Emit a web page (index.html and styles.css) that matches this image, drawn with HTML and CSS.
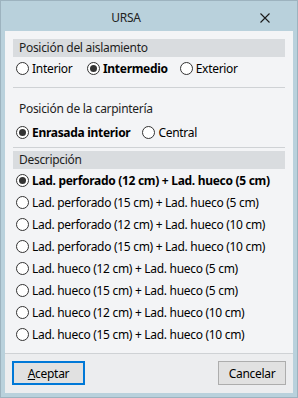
FILE: index.html
```html
<!DOCTYPE html>
<html lang="es">
<head>
  <meta charset="UTF-8">
  <meta name="viewport" content="width=device-width, initial-scale=1.0">
  <title>URSA</title>
  <link rel="stylesheet" href="styles.css">
</head>
<body>
  <div class="window">
    <div class="titlebar">
      <div class="title">URSA</div>
      <div class="close-button">
        <svg width="10" height="10" viewBox="0 0 10 10">
          <path d="M0.5 0.5 L9.5 9.5 M9.5 0.5 L0.5 9.5" stroke="#1a1a1a" stroke-width="1.1" fill="none"/>
        </svg>
      </div>
    </div>

    <div class="client">
      <div class="content">
        <div class="group">
          <div class="group-title shaded">Posición del aislamiento</div>
          <div class="option-row">
            <label class="radio wide"><span class="circle"></span>Interior</label>
            <label class="radio checked"><span class="circle"></span>Intermedio</label>
            <label class="radio"><span class="circle"></span>Exterior</label>
          </div>
        </div>

        <div class="separator"></div>

        <div class="group group-plain">
          <div class="group-title">Posición de la carpintería</div>
          <div class="option-row">
            <label class="radio checked"><span class="circle"></span>Enrasada interior</label>
            <label class="radio"><span class="circle"></span>Central</label>
          </div>
        </div>

        <div class="separator separator-tight"></div>

        <div class="group">
          <div class="group-title shaded">Descripción</div>
          <div class="option-list">
            <label class="radio checked"><span class="circle"></span>Lad. perforado (12 cm) + Lad. hueco (5 cm)</label>
            <label class="radio"><span class="circle"></span>Lad. perforado (15 cm) + Lad. hueco (5 cm)</label>
            <label class="radio"><span class="circle"></span>Lad. perforado (12 cm) + Lad. hueco (10 cm)</label>
            <label class="radio"><span class="circle"></span>Lad. perforado (15 cm) + Lad. hueco (10 cm)</label>
            <label class="radio"><span class="circle"></span>Lad. hueco (12 cm) + Lad. hueco (5 cm)</label>
            <label class="radio"><span class="circle"></span>Lad. hueco (15 cm) + Lad. hueco (5 cm)</label>
            <label class="radio"><span class="circle"></span>Lad. hueco (12 cm) + Lad. hueco (10 cm)</label>
            <label class="radio"><span class="circle"></span>Lad. hueco (15 cm) + Lad. hueco (10 cm)</label>
          </div>
        </div>
      </div>

      <div class="footer">
        <button class="button default"><u>A</u>ceptar</button>
        <button class="button cancel">Cancelar</button>
      </div>
    </div>
  </div>
</body>
</html>
```

FILE: styles.css
```css
:root {
  --frame-color: #b9d1dc;
  --frame-edge: #9db3bf;
  --client-bg: #f3f4f6;
  --footer-bg: #ecedef;
  --header-bg: #d9dcdf;
  --line-color: #cfd2d5;
  --text-color: #000;
}

* {
  margin: 0;
  padding: 0;
  box-sizing: border-box;
}

body {
  font-family: 'Noto Sans', 'Open Sans', sans-serif;
  font-size: 12px;
  letter-spacing: -0.3px;
  color: var(--text-color);
  background-color: var(--frame-color);
}

.window {
  width: 298px;
  height: 398px;
  display: flex;
  flex-direction: column;
  background-color: var(--frame-color);
  border: 1px solid var(--frame-edge);
  padding: 0 4px 4px 4px;
}

/* Title bar */
.titlebar {
  height: 30px;
  display: flex;
  align-items: center;
}

.title {
  flex: 1;
  text-align: center;
  padding-left: 5px;
  padding-top: 2px;
  color: #222;
}

.close-button {
  width: 46px;
  height: 30px;
  margin-right: 5px;
  display: flex;
  align-items: center;
  justify-content: center;
  padding-top: 3px;
}

/* Client area */
.client {
  flex: 1;
  display: flex;
  flex-direction: column;
  background-color: var(--client-bg);
}

.content {
  flex: 1;
  padding: 8px 8px 0 8px;
}

.group-title {
  height: 18px;
  line-height: 18px;
  padding-left: 6px;
  color: #1e1e1e;
}

.group-title.shaded {
  background-color: var(--header-bg);
}

.group-plain {
  margin-top: 12px;
}

.group-plain .option-row {
  margin-top: 3px;
}

.option-row {
  display: flex;
  gap: 12px;
  padding-left: 3px;
}

.option-list {
  display: flex;
  flex-direction: column;
  padding-left: 3px;
}

.radio {
  height: 22px;
  display: flex;
  align-items: center;
  gap: 3px;
  white-space: nowrap;
}

.radio.wide {
  min-width: 59px;
}

.circle {
  width: 13px;
  height: 13px;
  border: 1px solid #333;
  border-radius: 50%;
  background-color: #fff;
  display: flex;
  align-items: center;
  justify-content: center;
  flex-shrink: 0;
}

.radio.checked {
  font-weight: 700;
}

.radio.checked .circle::after {
  content: "";
  width: 7px;
  height: 7px;
  border-radius: 50%;
  background-color: #333;
}

.separator {
  height: 1px;
  background-color: var(--line-color);
  margin-top: 8px;
}

.separator-tight {
  margin-top: 4px;
  margin-bottom: 3px;
}

/* Footer */
.footer {
  height: 40px;
  border-top: 1px solid var(--line-color);
  background-color: var(--footer-bg);
  display: flex;
  justify-content: space-between;
  align-items: flex-start;
  padding: 7px 7px 0 7px;
}

.button {
  height: 24px;
  background-color: #e1e1e1;
  border: 1px solid #adadad;
  font-family: inherit;
  font-size: 12px;
  letter-spacing: inherit;
  color: var(--text-color);
}

.button.default {
  width: 73px;
  border: 2px solid #0078d7;
}

.button.cancel {
  width: 68px;
}
```
